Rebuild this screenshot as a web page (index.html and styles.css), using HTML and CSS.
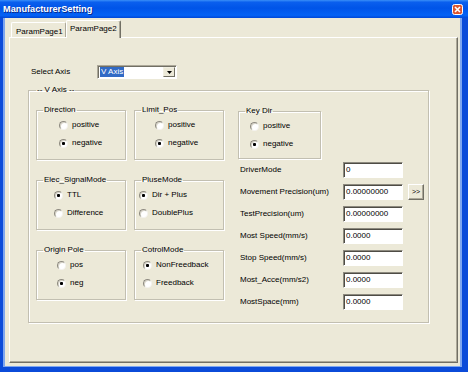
FILE: index.html
```html
<!DOCTYPE html>
<html lang="en">
<head>
    <meta charset="UTF-8">
    <title>ManufacturerSetting</title>
    <link rel="stylesheet" href="styles.css">
</head>
<body>

<div class="window">
    <div class="titlebar">
        <span class="title">ManufacturerSetting</span>
        <span class="close">
            <svg width="11" height="11" viewBox="0 0 11 11">
                <rect x="0.5" y="0.5" width="10" height="10" rx="2" fill="#dc5631" stroke="#fff"/>
                <path d="M3 3 L8 8 M8 3 L3 8" stroke="#fff" stroke-width="1.6"/>
            </svg>
        </span>
    </div>

    <div class="client">
        <div class="tabs">
            <span class="tab">ParamPage1</span>
            <span class="tab active">ParamPage2</span>
        </div>

        <div class="panel">
            <div class="axis-row">
                <span class="axis-label">Select Axis</span>
                <div class="combo">
                    <span class="combo-text"><span class="sel">V Axis</span></span>
                    <span class="combo-btn">
                        <svg width="5" height="3" viewBox="0 0 5 3"><path d="M0 0 H5 L2.5 3 Z" fill="#000"/></svg>
                    </span>
                </div>
            </div>

            <fieldset class="frame axis-frame">
                <legend>-- V Axis --</legend>
                <div class="axis-body">
                    <div class="groups">
                        <fieldset class="frame group ind-16">
                            <legend>Direction</legend>
                            <div class="radio"><i></i>positive</div>
                            <div class="radio checked"><i></i>negative</div>
                        </fieldset>
                        <fieldset class="frame group ind-14">
                            <legend>Limit_Pos</legend>
                            <div class="radio"><i></i>positive</div>
                            <div class="radio checked"><i></i>negative</div>
                        </fieldset>
                        <fieldset class="frame group ind-11">
                            <legend>Elec_SignalMode</legend>
                            <div class="radio checked"><i></i>TTL</div>
                            <div class="radio"><i></i>Difference</div>
                        </fieldset>
                        <fieldset class="frame group ind-0">
                            <legend>PluseMode</legend>
                            <div class="radio checked"><i></i>Dir + Plus</div>
                            <div class="radio"><i></i>DoublePlus</div>
                        </fieldset>
                        <fieldset class="frame group ind-14">
                            <legend>Origin Pole</legend>
                            <div class="radio"><i></i>pos</div>
                            <div class="radio checked"><i></i>neg</div>
                        </fieldset>
                        <fieldset class="frame group ind-3">
                            <legend>CotrolMode</legend>
                            <div class="radio checked"><i></i>NonFreedback</div>
                            <div class="radio"><i></i>Freedback</div>
                        </fieldset>
                    </div>

                    <div class="params">
                        <fieldset class="frame group keydir ind-5">
                            <legend>Key Dir</legend>
                            <div class="radio"><i></i>positive</div>
                            <div class="radio checked"><i></i>negative</div>
                        </fieldset>

                        <div class="fields">
                            <div class="field">
                                <span>DriverMode</span>
                                <span class="edit">0</span>
                            </div>
                            <div class="field">
                                <span>Movement Precision(um)</span>
                                <span class="edit">0.00000000</span>
                                <span class="btn">&gt;&gt;</span>
                            </div>
                            <div class="field">
                                <span>TestPrecision(um)</span>
                                <span class="edit">0.00000000</span>
                            </div>
                            <div class="field">
                                <span>Most Speed(mm/s)</span>
                                <span class="edit">0.0000</span>
                            </div>
                            <div class="field">
                                <span>Stop Speed(mm/s)</span>
                                <span class="edit">0.0000</span>
                            </div>
                            <div class="field">
                                <span>Most_Acce(mm/s2)</span>
                                <span class="edit">0.0000</span>
                            </div>
                            <div class="field">
                                <span>MostSpace(mm)</span>
                                <span class="edit">0.0000</span>
                            </div>
                        </div>
                    </div>
                </div>
            </fieldset>
        </div>
    </div>
</div>

</body>
</html>
```

FILE: styles.css
```css
*{
    margin:0;
    padding:0;
    box-sizing:border-box;
}

body {
    background:#fff;
    font:8px/10px "Liberation Sans", Arial, sans-serif;
    color:#000;
}

.window {
    width:468px;
    height:372px;
    display:flex;
    flex-direction:column;
}

/* title bar */
.titlebar {
    height:18px;
    display:flex;
    align-items:center;
    justify-content:space-between;
    padding:0 5px 0 3px;
    background:linear-gradient(180deg,#3a8ff8 0%,#0a5fee 12%,#0054e8 45%,#0462f5 85%,#0047d6 100%);
}
.title {
    color:#fff;
    font-weight:bold;
    font-size:9.2px;
    text-shadow:1px 1px #0a2a8a;
}
.close svg {
    display:block;
}

/* window body */
.client {
    flex:1;
    display:flex;
    flex-direction:column;
    background:#ece9d8;
    border:solid #0b4bd9;
    border-width:0 6px 5px 3px;
    box-shadow:inset 2px 0 #7ea6ef, inset -2px 0 #7ea6ef, inset 0 -1px #7ea6ef;
    padding:2px 4px 4px 6px;
}

.tabs {
    display:flex;
    align-items:flex-end;
    height:17px;
    padding-left:2px;
}
.tab {
    width:55px;
    height:15px;
    padding:4px 0 0 4px;
    border:1px solid #fff;
    border-bottom:none;
    border-right-color:#aca899;
    border-radius:2px 2px 0 0;
}
.tab.active {
    height:18px;
    margin-bottom:-1px;
    padding:3px 0 0 3px;
    background:#ece9d8;
    border-right-color:#716f64;
    box-shadow:inset -1px 0 #aca899;
    position:relative;
}

.panel {
    flex:1;
    border:1px solid;
    border-color:#fff #716f64 #716f64 #fff;
    box-shadow:inset -1px -1px #aca899;
    padding:27px 0 0 18px;
}

/* select axis */
.axis-row {
    display:flex;
    align-items:center;
    margin-left:3px;
}
.axis-label {
    width:66px;
}
.combo {
    width:80px;
    height:14px;
    display:flex;
    background:#fff;
    border:1px solid;
    border-color:#aca899 #fff #fff #aca899;
    box-shadow:inset 1px 1px #716f64;
    padding:1px 1px 1px 2px;
}
.combo-text {
    flex:1;
    line-height:10px;
}
.sel {
    display:inline-block;
    background:#316ac5;
    color:#fff;
    padding:0 1px;
}
.combo-btn {
    width:12px;
    display:flex;
    align-items:center;
    justify-content:center;
    background:#ece9d8;
    border:1px solid;
    border-color:#f1efe2 #716f64 #716f64 #f1efe2;
}
.combo-btn svg {
    display:block;
}

/* group frames */
.frame {
    border:1px solid #c2bfb1;
    box-shadow:1px 1px #fff, inset 1px 1px #fff;
    min-width:0;
}
.frame legend {
    padding:0 1px;
    line-height:10px;
}

.axis-frame {
    width:401px;
    margin-top:6px;
    padding:10px 0 12px 7px;
}
.axis-body {
    display:flex;
    align-items:flex-start;
}

.groups {
    display:grid;
    grid-template-columns:90px 90px;
    column-gap:8px;
    row-gap:15px;
}
.group {
    padding:1px 0 7px 6px;
}

/* where each group's radio column starts */
.ind-0 .radio { margin-left:-2px; }
.ind-3 .radio { margin-left:2px; }
.ind-5 .radio { margin-left:5px; }
.ind-11 .radio { margin-left:11px; }
.ind-14 .radio { margin-left:14px; }
.ind-16 .radio { margin-left:16px; }

.radio {
    height:18px;
    display:flex;
    align-items:center;
    gap:4px;
    white-space:nowrap;
}
.radio i {
    width:9px;
    height:9px;
    flex:none;
    border-radius:50%;
    background:#fff;
    border:1px solid;
    border-color:#8d8a7f #f4f3ee #f4f3ee #8d8a7f;
    box-shadow:inset 1px 1px #d6d3c7;
}
.radio.checked i {
    background:radial-gradient(circle, #000 0 1.3px, #fff 1.8px);
}

/* right side parameters */
.params {
    margin-left:14px;
    margin-top:1px;
    display:flex;
    flex-direction:column;
}
.keydir {
    width:83px;
    padding-bottom:5px;
}
.fields {
    margin-top:3px;
    display:flex;
    flex-direction:column;
    gap:6px;
}
.field {
    display:grid;
    grid-template-columns:98px 60px 16px;
    column-gap:5px;
    align-items:center;
    padding-left:2px;
    height:16px;
}
.edit {
    height:16px;
    background:#fff;
    border:1px solid;
    border-color:#8d8a7f #fff #fff #8d8a7f;
    box-shadow:inset 1px 1px #4e4c45;
    padding:1px 0 0 2px;
    line-height:12px;
}
.btn {
    height:16px;
    border:1px solid;
    border-color:#fff #716f64 #716f64 #fff;
    box-shadow:inset -1px -1px #aca899;
    text-align:center;
    line-height:13px;
    font-size:7px;
}
```
